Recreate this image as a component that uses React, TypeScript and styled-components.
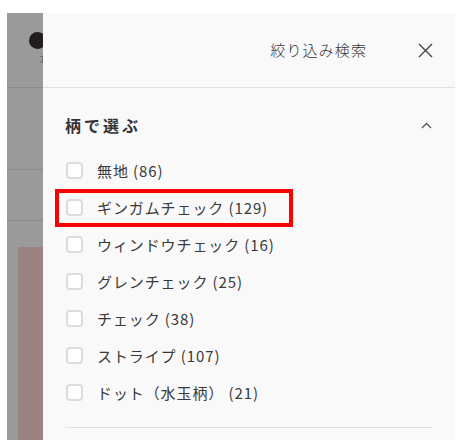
import React from "react";
import styled, { createGlobalStyle } from "styled-components";

const GlobalStyle = createGlobalStyle`
  html, body { margin: 0; padding: 0; background: #ffffff; }
  body { font-family: "Noto Sans CJK JP", "Noto Sans", sans-serif; color: #333; }
  *, *::before, *::after { box-sizing: border-box; }
`;

const Page = styled.div`
  width: 462px;
  height: 440px;
  padding: 13px 7px 0 7px;
  display: flex;
  overflow: hidden;
  background: #fff;
`;

const Backdrop = styled.div`
  width: 36px;
  flex: none;
  background: #9a9a9a;
  display: flex;
  flex-direction: column;
  overflow: hidden;
`;

const BackdropHeader = styled.div`
  height: 75px;
  flex: none;
  border-bottom: 1px solid #8a8a8a;
  position: relative;
`;

const Dot = styled.div`
  position: absolute;
  left: 22px;
  top: 19px;
  width: 17px;
  height: 17px;
  border-radius: 50%;
  background: #221c1c;
`;

const DotLabel = styled.span`
  position: absolute;
  left: 32px;
  top: 41px;
  font-size: 8px;
  color: #3a3a3a;
  line-height: 10px;
`;

const BackdropBand = styled.div<{ $h: number }>`
  height: ${(p) => p.$h}px;
  flex: none;
  border-bottom: 1px solid #8a8a8a;
`;

const BackdropImage = styled.div`
  margin: 26px 0 0 11px;
  flex: 1;
  background: #9b8383;
`;

const Drawer = styled.div`
  width: 412px;
  flex: none;
  background: #f9f9f9;
  display: flex;
  flex-direction: column;
`;

const DrawerHeader = styled.div`
  height: 75px;
  flex: none;
  border-bottom: 1px solid #dedede;
  display: flex;
  align-items: center;
  justify-content: flex-end;
  gap: 50px;
  padding: 0 22px 0 0;
`;

const DrawerTitle = styled.h2`
  margin: 0;
  font-size: 15px;
  font-weight: 300;
  letter-spacing: 1.1px;
  color: #333;
  line-height: 24px;
`;

const CloseButton = styled.button`
  border: 0;
  background: none;
  padding: 0;
  width: 16px;
  height: 16px;
  display: flex;
  align-items: center;
  justify-content: center;
  color: #444;
`;

const Section = styled.section`
  margin: 0 23px 0 22px;
  padding: 0 0 16px 0;
  border-bottom: 1px solid #dedede;
`;

const SectionHeader = styled.div`
  display: flex;
  align-items: center;
  justify-content: space-between;
  padding: 26px 0 16px 0;
`;

const SectionTitle = styled.h3`
  margin: 0;
  font-size: 16px;
  font-weight: 700;
  letter-spacing: 3px;
  line-height: 22px;
  color: #333;
`;

const List = styled.ul`
  list-style: none;
  margin: 0;
  padding: 0;
`;

const Row = styled.li<{ $highlighted?: boolean }>`
  position: relative;
  height: 37px;
  display: flex;
  align-items: center;
  gap: 14px;
  padding-left: 1px;
  ${(p) =>
    p.$highlighted
      ? `&::after {
    content: "";
    position: absolute;
    left: -10px;
    top: 0;
    width: 238px;
    height: 38px;
    border: 4px solid #ff0000;
    pointer-events: none;
  }`
      : ""}
`;

const Box = styled.span`
  width: 17px;
  height: 17px;
  flex: none;
  border: 2px solid #dcdcdc;
  border-radius: 4px;
  background: #fff;
`;

const Label = styled.span`
  font-size: 15px;
  letter-spacing: 0.9px;
  color: #3a3a3a;
  line-height: 20px;
  white-space: nowrap;
`;

const items = [
  { label: "無地 (86)" },
  { label: "ギンガムチェック (129)", highlighted: true },
  { label: "ウィンドウチェック (16)" },
  { label: "グレンチェック (25)" },
  { label: "チェック (38)" },
  { label: "ストライプ (107)" },
  { label: "ドット（水玉柄） (21)" },
];

export default function App() {
  return (
    <>
      <GlobalStyle />
      <Page>
        <Backdrop>
          <BackdropHeader>
            <Dot />
            <DotLabel>ア</DotLabel>
          </BackdropHeader>
          <BackdropBand $h={82} />
          <BackdropBand $h={51} />
          <BackdropImage />
        </Backdrop>
        <Drawer>
          <DrawerHeader>
            <DrawerTitle>絞り込み検索</DrawerTitle>
            <CloseButton aria-label="閉じる">
              <svg width="15" height="15" viewBox="0 0 15 15">
                <path d="M1 1 L14 14 M14 1 L1 14" stroke="#444" strokeWidth="1.4" fill="none" />
              </svg>
            </CloseButton>
          </DrawerHeader>
          <Section>
            <SectionHeader>
              <SectionTitle>柄で選ぶ</SectionTitle>
              <svg width="11" height="7" viewBox="0 0 11 7">
                <path d="M1 6 L5.5 1.5 L10 6" stroke="#555" strokeWidth="1.3" fill="none" />
              </svg>
            </SectionHeader>
            <List>
              {items.map((it) => (
                <Row key={it.label} $highlighted={it.highlighted}>
                  <Box />
                  <Label>{it.label}</Label>
                </Row>
              ))}
            </List>
          </Section>
        </Drawer>
      </Page>
    </>
  );
}
